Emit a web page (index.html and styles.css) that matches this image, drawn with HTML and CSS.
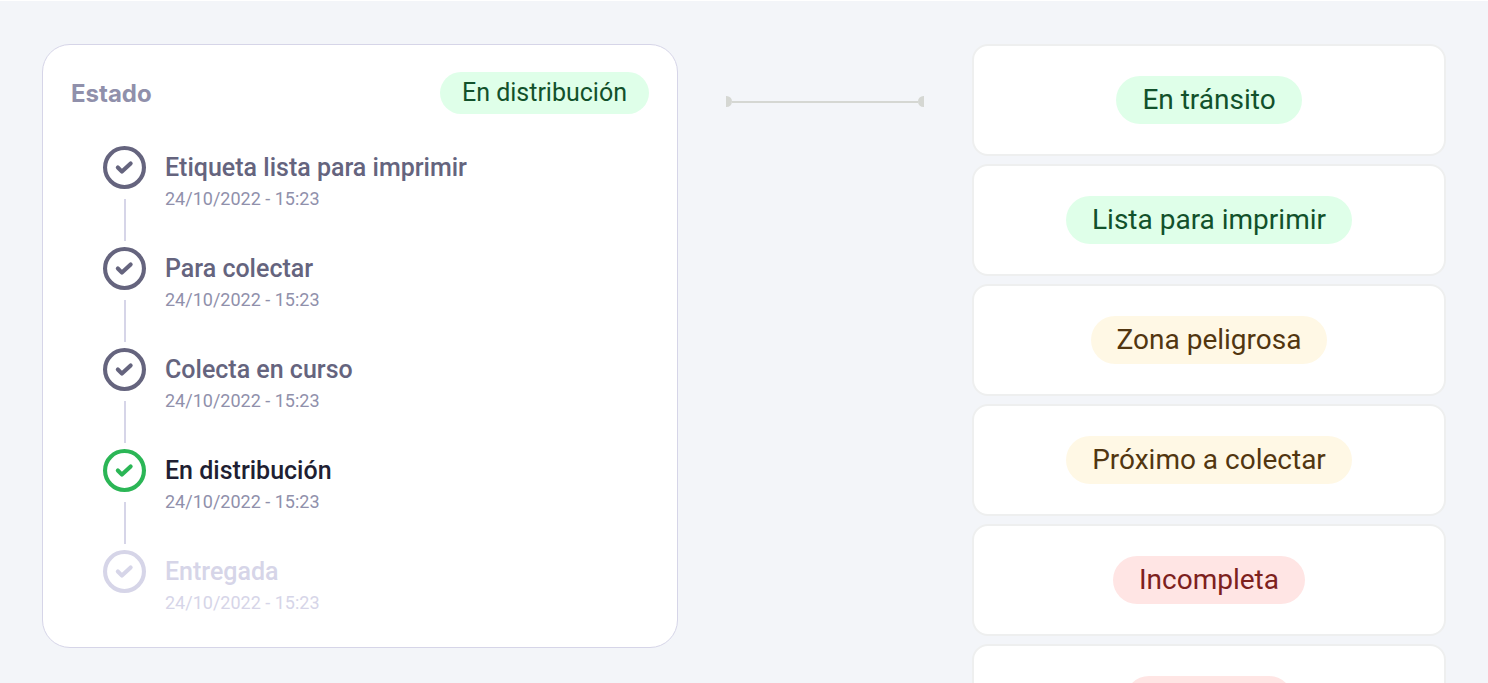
FILE: index.html
```html
<!DOCTYPE html>
<html lang="es">

<head>
  <meta charset="UTF-8" />
  <title>Estado del envío</title>
  <link rel="stylesheet" href="styles.css">
</head>

<body>

<!-- Icono compartido por todos los pasos -->
<svg class="sprite" aria-hidden="true">
  <symbol id="check" viewBox="0 0 42 42">
    <circle cx="21" cy="21" r="19" />
    <path d="M14.5 21 L18.5 25 L27 17" />
  </symbol>
</svg>

<main class="board">

  <!-- Seguimiento -->
  <section class="panel">
    <header class="panel-header">
      <h1>Estado</h1>
      <span class="badge badge-small green">En distribución</span>
    </header>

    <ol class="steps">
      <li class="step">
        <svg class="step-icon"><use href="#check" /></svg>
        <div class="step-text">
          <h2>Etiqueta lista para imprimir</h2>
          <time datetime="2022-10-24T15:23">24/10/2022 - 15:23</time>
        </div>
      </li>
      <li class="step">
        <svg class="step-icon"><use href="#check" /></svg>
        <div class="step-text">
          <h2>Para colectar</h2>
          <time datetime="2022-10-24T15:23">24/10/2022 - 15:23</time>
        </div>
      </li>
      <li class="step">
        <svg class="step-icon"><use href="#check" /></svg>
        <div class="step-text">
          <h2>Colecta en curso</h2>
          <time datetime="2022-10-24T15:23">24/10/2022 - 15:23</time>
        </div>
      </li>
      <li class="step current">
        <svg class="step-icon"><use href="#check" /></svg>
        <div class="step-text">
          <h2>En distribución</h2>
          <time datetime="2022-10-24T15:23">24/10/2022 - 15:23</time>
        </div>
      </li>
      <li class="step pending">
        <svg class="step-icon"><use href="#check" /></svg>
        <div class="step-text">
          <h2>Entregada</h2>
          <time datetime="2022-10-24T15:23">24/10/2022 - 15:23</time>
        </div>
      </li>
    </ol>
  </section>

  <!-- Conector -->
  <div class="connector"><span class="connector-line"></span></div>

  <!-- Estados posibles -->
  <ul class="statuses">
    <li class="card"><span class="badge green">En tránsito</span></li>
    <li class="card"><span class="badge green">Lista para imprimir</span></li>
    <li class="card"><span class="badge yellow">Zona peligrosa</span></li>
    <li class="card"><span class="badge yellow">Próximo a colectar</span></li>
    <li class="card"><span class="badge red">Incompleta</span></li>
    <li class="card"><span class="badge red">Con error</span></li>
  </ul>

</main>

</body>
</html>
```
FILE: styles.css
```css
* {
  box-sizing: border-box;
}
body {
  margin: 0;
  font-family: Roboto, sans-serif;
  background-color: #f3f5f9;
}
h1,
h2,
ol,
ul {
  margin: 0;
  padding: 0;
}
ol,
ul {
  list-style: none;
}
.sprite {
  display: none;
}
.board {
  display: grid;
  grid-template-columns: 636fr 198fr 474fr;
  align-items: start;
  gap: 48px;
  height: 100vh;
  padding: 43px 42px 0;
  border-top: 1px solid #fff;
  overflow: hidden;
}

/* Seguimiento */
.panel {
  padding: 27px 28px 28px;
  background-color: #fff;
  border: 1px solid #d6d5e8;
  border-radius: 28px;
}
.panel-header {
  display: flex;
  justify-content: space-between;
  align-items: center;
  margin-bottom: 32px;
}
h1 {
  font-family: Inter, sans-serif;
  font-size: 24px;
  font-weight: 700;
  color: #9090ab;
}
.steps {
  padding-left: 32px;
}
.step {
  display: grid;
  grid-template-columns: 43px 1fr;
  grid-template-rows: 43px 38px;
  gap: 10px 19px;
  margin-bottom: 10px;
  color: #65647e;
}
.step:last-child {
  grid-template-rows: 43px;
  margin-bottom: 0;
}
/* Línea hacia el paso siguiente */
.step:not(:last-child)::after {
  content: "";
  grid-column: 1;
  grid-row: 2;
  width: 2px;
  height: 42px;
  margin-left: 21px;
  background-color: #d6d5e8;
}
.step-icon {
  width: 43px;
  height: 43px;
  fill: none;
  stroke: currentColor;
  stroke-width: 4;
  stroke-linecap: round;
  stroke-linejoin: round;
}
.step-text {
  grid-column: 2;
  grid-row: 1 / span 2;
  padding-top: 7px;
}
h2 {
  font-size: 25px;
  line-height: 30px;
  font-weight: 500;
}
time {
  display: block;
  font-size: 18px;
  line-height: 32px;
  color: #9090ab;
}
.current {
  color: #2bb656;
}
.current h2 {
  color: #1f1f33;
}
.pending,
.pending time {
  color: #d6d5e8;
}

/* Conector */
.connector {
  display: flex;
  align-items: center;
  margin-top: 52px;
}
.connector::before,
.connector::after {
  content: "";
  width: 6px;
  height: 11px;
  background-color: #d5d7d3;
}
.connector::before {
  border-radius: 0 6px 6px 0;
}
.connector::after {
  border-radius: 6px 0 0 6px;
}
.connector-line {
  flex: 1;
  height: 2px;
  background-color: #d5d7d3;
}

/* Estados posibles */
.statuses {
  display: grid;
  gap: 8px;
}
.card {
  display: flex;
  justify-content: center;
  padding: 30px;
  background-color: #fff;
  border: 2px solid #eeefef;
  border-radius: 16px;
}
.badge {
  padding: 0 26px;
  border-radius: 24px;
  font-size: 28px;
  line-height: 48px;
}
.badge-small {
  padding: 0 22px;
  font-size: 25px;
  line-height: 42px;
}
.green {
  background-color: #dfffe9;
  color: #12512b;
}
.yellow {
  background-color: #fff8e5;
  color: #523610;
}
.red {
  background-color: #ffe5e4;
  color: #7d211d;
}
```
